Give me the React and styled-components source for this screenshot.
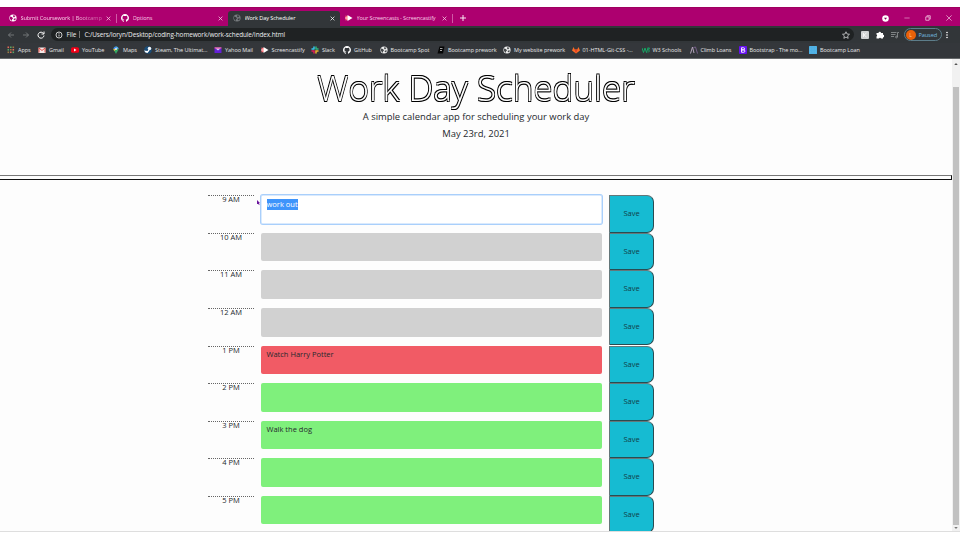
import React from 'react';
import styled, { createGlobalStyle } from 'styled-components';

const Global = createGlobalStyle`
  * { box-sizing: border-box; }
  body { margin: 0; background: #fff; font-family: "Open Sans", "Noto Sans", sans-serif; color: #25292d; }
`;

const Screen = styled.div`
  width: 960px; height: 540px; padding-top: 7px; overflow: hidden; background: #fff;
  display: flex; flex-direction: column;
`;

const TabStrip = styled.header`
  height: 19px; flex: none; display: flex; align-items: flex-end;
  background: #ad006f; border-top: 1px solid #a0005f; color: #f9d8ec;
`;
const Tab = styled.div`
  width: ${p => p.$w}px; height: 15.5px; padding: 0 5px 0 ${p => p.$pad || 9}px; flex: none;
  display: flex; align-items: center; gap: 3.5px;
  background: ${p => (p.$active ? '#323639' : 'transparent')};
  color: ${p => (p.$active ? '#fff' : '#f7cde5')};
  border-radius: 3px 3px 0 0;
  svg { flex: none; }
`;
const TabTitle = styled.span`
  flex: 1; min-width: 0; overflow: hidden; font-size: 5.6px; line-height: 9px; white-space: nowrap;
  letter-spacing: ${p => p.$ls ?? -0.1}px;
  ${p => p.$fade && 'mask-image: linear-gradient(90deg, #000 65%, rgba(0,0,0,.45) 90%);'}
`;
const Divider = styled.i`
  width: 1px; height: 9px; margin-bottom: 3px; background: #cf5aa6; flex: none;
`;
const NewTab = styled.div`
  height: 15.5px; padding-left: 7px; display: flex; align-items: center; flex: 1;
`;
const WindowControls = styled.div`
  display: flex; align-items: center; height: 18px; gap: 15px; padding: 2px 8px 0 0; color: #fff;
`;

const Toolbar = styled.div`
  height: 17px; flex: none; display: flex; align-items: center; background: #323639; padding-left: 7px;
`;
const NavIcons = styled.div`
  display: flex; gap: 7px; width: 44px; margin-left: -0.5px;
`;
const AddressBar = styled.div`
  width: 803px; height: 13px; flex: none; border-radius: 7px; background: #1f2223; color: #eceeef;
  display: flex; align-items: center; padding: 0 4px; font-size: 6.4px; letter-spacing: -0.05px;
`;
const Scheme = styled.span`
  margin-left: 4px; padding-right: 3px; border-right: 1px solid #777; line-height: 7px;
`;
const Url = styled.span`
  margin-left: 4px; flex: 1; white-space: nowrap; letter-spacing: -0.08px;
`;
const Extensions = styled.div`
  display: flex; align-items: center; gap: 7px; padding-left: 7px;
  svg { flex: none; }
`;
const Profile = styled.div`
  width: 38px; height: 13px; flex: none; margin: 0 -6px 0 -2px; border: 1px solid #5d7d8a; border-radius: 7px;
  display: flex; align-items: center; gap: 3px; padding-left: 1px; color: #75bde0; font-size: 5.6px;
  letter-spacing: -0.1px;
`;
const Avatar = styled.span`
  width: 10px; height: 10px; border-radius: 50%; background: #ea6209; color: #ffc59b;
  font-size: 5px; line-height: 10px; text-align: center;
`;

const Bookmarks = styled.nav`
  height: 16px; flex: none; display: flex; align-items: center; padding: 0 0 2px 7px;
  background: #34373b; border-bottom: 1px solid #66696b; color: #e6e7e8;
`;
const Bookmark = styled.div`
  width: ${p => p.$w}px; flex: none; display: flex; align-items: center; white-space: nowrap;
  font-size: 5.5px; line-height: 8px; letter-spacing: -0.04px;
  svg { flex: none; margin-right: 3px; }
`;

const Viewport = styled.div`
  height: 473px; flex: none; display: flex; overflow: hidden; background: #fdfdfd; border-bottom: 1px solid #dedede;
`;
const Page = styled.main`
  width: 952px; height: 475px;
`;
const Hero = styled.section`
  height: 116px; padding-top: 5px; text-align: center;
`;
const Title = styled.h1`
  margin: -1px 0 0; height: 44.5px; font-size: 35px; line-height: 50px; font-weight: 300; color: #fff;
  white-space: nowrap; will-change: transform;
  text-shadow: -0.7px -0.7px 0 #000, 0.7px -0.7px 0 #000, -0.7px 0.7px 0 #000, 0.7px 0.7px 0 #000;
`;
const Lead = styled.p`
  margin: 0; height: 17px; font-size: 9.42px; line-height: 17px;
`;
const Rule = styled.div`
  height: 5px; border: 1px solid #777; border-left: 0; border-bottom: 1px solid #111;
  border-right: 1px solid #111;
`;
const Schedule = styled.section`
  margin: 15.3px 0 0 208px; width: 448px; display: flex; flex-direction: column;
`;
const Row = styled.div`
  height: 37.57px; flex: none; display: grid; grid-template-columns: 46px 342px 45px; column-gap: 6.5px;
  align-items: start;
`;
const Hour = styled.div`
  border-top: 1px dotted #666; text-align: center; font-size: 7.5px; line-height: 7px;
`;
const colours = { past: '#d1d1d1', present: '#f15b65', future: '#7ff07c', active: '#fff' };
const Entry = styled.div`
  width: 341.9px; height: 28.6px; padding: 4.5px 6px; border-radius: 2px; font-size: 7.5px; line-height: 9px;
  background: ${p => colours[p.$state]};
  ${p => p.$state === 'active' && 'box-shadow: 0 0 0 1px #a9cffb, inset 0 0 0 0.5px #b5d6fb;'}
`;
const Selection = styled.span`
  display: inline-block; height: 11px; margin-top: -0.5px; line-height: 11px; background: #3e94fb; color: #fff;
`;
const SaveButton = styled.button`
  width: 45px; height: 37.5px; margin: 0; padding: 0 0 1.5px; border: solid;
  border-width: 1px 1.5px 1.5px 1px; border-color: #64777a #294c52 #294c52 #64777a;
  border-radius: 0 7px 7px 0; background: #16bbd2; color: #124048; font: 7.5px "Open Sans", sans-serif;
`;

const Scrollbar = styled.aside`
  width: 8px; height: 472px; background: #f1f1f1; display: flex; flex-direction: column;
  align-items: center; justify-content: space-between; padding: 3px 0 1px;
`;
const Thumb = styled.div`
  width: 6px; height: 438px; background: #c1c1c1; margin-top: 19px; flex: none;
`;
const Cursor = styled.svg`
  position: absolute; left: 257px; top: 200px;
`;

const Svg = ({ s = 8, children, ...rest }) => (
  <svg width={s} height={s} viewBox="0 0 16 16" fill="none" {...rest}>{children}</svg>
);
const Cross = ({ s = 5 }) => <Svg s={s} stroke="currentColor" strokeWidth="2.4"><path d="M2 2l12 12M14 2L2 14" /></Svg>;
const Globe = ({ c = '#eee', bg = '#45484b', s = 8 }) => (
  <Svg s={s}><circle cx="8" cy="8" r="7.2" fill={c} /><path d="M2 5l4 1 2 3-2 2v3L2 10zM9 2l4 2-3 3-2-2zM10 9l4 0-2 4-3-2z" fill={bg} /></Svg>
);
const Github = ({ s = 8 }) => (
  <Svg s={s}><path fill="#fff" fillRule="evenodd" d="M8 0C3.58 0 0 3.58 0 8c0 3.54 2.29 6.53 5.47 7.59.4.07.55-.17.55-.38v-1.49c-2.01.37-2.53-.49-2.69-.94-.09-.23-.48-.94-.82-1.13-.28-.15-.68-.52-.01-.53.63-.01 1.08.58 1.23.82.72 1.21 1.87.87 2.33.66.07-.52.28-.87.51-1.07-1.78-.2-3.64-.89-3.64-3.95 0-.87.31-1.59.82-2.15-.08-.2-.36-1.02.08-2.12 0 0 .67-.21 2.2.82a7.6 7.6 0 0 1 4 0c1.53-1.04 2.2-.82 2.2-.82.44 1.1.16 1.92.08 2.12.51.56.82 1.27.82 2.15 0 3.07-1.87 3.75-3.65 3.95.29.25.54.73.54 1.48v2.2c0 .21.15.46.55.38A8 8 0 0 0 16 8c0-4.42-3.58-8-8-8z" /></Svg>
);
const Cast = () => <Svg><path d="M1 3l7 2v6l-7 2z" fill="#ff6b73" /><path d="M5 2l10 6-10 6z" fill="#fff" /><path d="M0 7h5v2H0z" fill="#ffd0d4" /></Svg>;

const icons = {
  apps: <Svg>{[0, 1, 2].map(y => [0, 1, 2].map(x => <path key={`${x}${y}`} d={`M${1 + x * 5} ${1 + y * 5}h3.2v3.2h-3.2z`} fill={['#e36a58', '#58a566', '#9d7a46'][(x + y) % 3]} />))}</Svg>,
  gmail: <Svg><path d="M1 3h14v11H1z" fill="#f4e9e8" /><path d="M2 13V4l6 5 6-5v9" stroke="#e34b43" strokeWidth="2" /></Svg>,
  youtube: <Svg><rect y="2.5" width="16" height="11" rx="3" fill="#f00018" /><path d="M6 5l5 3-5 3z" fill="#fff" /></Svg>,
  maps: <Svg><path d="M8 16C7 12 3 10 3 6a5 5 0 0 1 10 0c0 4-4 6-5 10z" fill="#35a866" /><path d="M8 1a5 5 0 0 0-5 5h5z" fill="#4284ee" /><path d="M8 1v5h5a5 5 0 0 0-5-5z" fill="#52a5ef" /><path d="M3 6c0 2 1 3 2 4l3-4z" fill="#f4bd32" /><circle cx="8" cy="6" r="2" fill="#eee" /></Svg>,
  steam: <Svg><circle cx="8" cy="8" r="7.5" fill="#194d79" /><circle cx="11" cy="5" r="3.5" fill="#f1f6fb" /><path d="M0 9l7 1 2-3 2 2-4 5-4-1z" fill="#fff" /></Svg>,
  yahoo: <Svg><path d="M1 3h14v11H1z" fill="#6420d8" /><path d="M1 3l7 6 7-6z" fill="#d9cff9" /><path d="M1 3h14v2H1z" fill="#de397e" /></Svg>,
  cast: <Cast />,
  slack: <Svg strokeWidth="3" strokeLinecap="round"><path d="M6 2v4M2 6h4" stroke="#36c5f0" /><path d="M10 2v4M14 6h-3" stroke="#2eb67d" /><path d="M10 14v-4h4" stroke="#ecb22e" /><path d="M6 14v-4H2" stroke="#e01e5a" /></Svg>,
  github: <Github />,
  globe: <Globe />,
  prework: <Svg><path d="M5 1h10l-3 14H1z" fill="#050505" /><path d="M6 5h5M6 9h4" stroke="#ddd" strokeWidth="1.5" /></Svg>,
  gitlab: <Svg><path d="M8 15L0 9l3-7 2.5 5h5L13 2l3 7z" fill="#fc6d26" /><path d="M8 15L5 7h6z" fill="#e24329" /></Svg>,
  w3: <Svg stroke="#16a765" strokeWidth="2"><path d="M0 4l3 9 3-9 3 9 3-9M11 4h4l-2 4 2 2-3 3" /></Svg>,
  climb: <Svg strokeWidth="2"><path d="M1 15L5 2l3 12" stroke="#b5a6bc" /><path d="M7 3l4-1 4 13" stroke="#76608a" /></Svg>,
  bootstrap: <Svg><rect width="16" height="16" rx="2" fill="#6610f2" /><path d="M5 3.5h4a2 2 0 0 1 0 4.3H5zm0 4.3h4.5a2.3 2.3 0 0 1 0 4.7H5z" stroke="#fff" strokeWidth="1.8" /></Svg>,
  loan: <Svg><rect width="16" height="16" rx="1" fill="#4eb0e4" /><path d="M3 1v14M8 1v14M13 1v14" stroke="#70c1eb" strokeDasharray="1 2" /></Svg>,
};

const bookmarks = [
  ['apps', 'Apps', 31], ['gmail', 'Gmail', 33], ['youtube', 'YouTube', 41], ['maps', 'Maps', 32],
  ['steam', 'Steam, The Ultimat...', 70], ['yahoo', 'Yahoo Mail', 46.5], ['cast', 'Screencastify', 50.5],
  ['slack', 'Slack', 32], ['github', 'GitHub', 36.5], ['globe', 'Bootcamp Spot', 57.5],
  ['prework', 'Bootcamp prework', 66], ['globe', 'My website prework', 68.5],
  ['gitlab', '01-HTML-Git-CSS -...', 70], ['w3', 'W3 Schools', 48], ['climb', 'Climb Loans', 49],
  ['bootstrap', 'Bootstrap - The mo...', 70.5], ['loan', 'Bootcamp Loan', 60],
];

const rows = [
  ['9 AM', 'active', 'work out'], ['10 AM', 'past', ''], ['11 AM', 'past', ''], ['12 AM', 'past', ''],
  ['1 PM', 'present', 'Watch Harry Potter'], ['2 PM', 'future', ''], ['3 PM', 'future', 'Walk the dog'],
  ['4 PM', 'future', ''], ['5 PM', 'future', ''],
];

export default function App() {
  return (
    <Screen>
      <Global />
      <TabStrip>
        <Tab $w={116}><Globe c="#fff" bg="#ad006f" /><TabTitle $fade>Submit Coursework | Bootcamp</TabTitle><Cross /></Tab>
        <Divider />
        <Tab $w={110.5} $pad={4}><Github /><TabTitle>Options</TabTitle><Cross /></Tab>
        <Tab $w={112.5} $pad={5.5} $active><Globe c="#777b7e" bg="#35383b" /><TabTitle>Work Day Scheduler</TabTitle><Cross /></Tab>
        <Tab $w={112} $pad={5}><Cast /><TabTitle $ls={-0.14}>Your Screencasts - Screencastify</TabTitle><Cross /></Tab>
        <Divider />
        <NewTab><Svg s={6} stroke="#fff" strokeWidth="2.4"><path d="M8 0v16M0 8h16" /></Svg></NewTab>
        <WindowControls>
          <Svg s={7}><circle cx="8" cy="8" r="7.5" fill="#fff" /><path d="M4.5 6h7L8 11z" fill="#850055" /></Svg>
          <Svg s={6} stroke="#e290c4" strokeWidth="2"><path d="M1 8h14" /></Svg>
          <Svg s={6} stroke="#f5cfe5" strokeWidth="2"><path d="M2 5h9v9H2zM5 4V2h9v9h-2" /></Svg>
          <Svg s={6} stroke="#f5cfe5" strokeWidth="1.8"><path d="M1 1l14 14M15 1L1 15" /></Svg>
        </WindowControls>
      </TabStrip>
      <Toolbar>
        <NavIcons>
          <Svg stroke="#7d8183" strokeWidth="1.7"><path d="M14 8H3M8 3L3 8l5 5" /></Svg>
          <Svg stroke="#7d8183" strokeWidth="1.7"><path d="M2 8h11M8 3l5 5-5 5" /></Svg>
          <Svg stroke="#fff" strokeWidth="2"><path d="M13 5a6 6 0 1 0 1 4M14 1v5H9" /></Svg>
        </NavIcons>
        <AddressBar>
          <Svg s={8} stroke="#ddd" strokeWidth="1.8"><circle cx="8" cy="8" r="6" /><path d="M8 7v4M8 4v1.5" /></Svg>
          <Scheme>File</Scheme>
          <Url>C:/Users/loryn/Desktop/coding-homework/work-schedule/index.html</Url>
          <Svg stroke="#d8dadb" strokeWidth="1.5"><path d="M8 1.5l2 4.5 5 .5-3.7 3.3 1 4.9L8 12.2l-4.3 2.5 1-4.9L1 6.5 6 6z" /></Svg>
        </AddressBar>
        <Extensions>
          <Svg><rect width="16" height="16" rx="2" fill="#d1d3d4" /><path d="M5 4v8M11 4L6 8l5 4" stroke="#f5f5f5" strokeWidth="2" /></Svg>
          <Svg><path d="M1 4h4a2.5 2.5 0 1 1 5 0h4v4a2.2 2.2 0 1 1 0 4v3h-4a2.2 2.2 0 0 0-4 0H1v-4a2.2 2.2 0 0 0 0-4z" fill="#fff" /></Svg>
          <Svg stroke="#8e9193" strokeWidth="1.7"><path d="M0 3h11M0 7h9M0 11h6M13 12V3h3" /><circle cx="11" cy="12" r="1.8" /></Svg>
          <Profile><Avatar>L</Avatar>Paused</Profile>
          <Svg s={8}><circle cx="8" cy="3" r="1.6" fill="#fff" /><circle cx="8" cy="8" r="1.6" fill="#fff" /><circle cx="8" cy="13" r="1.6" fill="#fff" /></Svg>
        </Extensions>
      </Toolbar>
      <Bookmarks>
        {bookmarks.map(([icon, label, w]) => <Bookmark key={label} $w={w}>{icons[icon]}{label}</Bookmark>)}
      </Bookmarks>
      <Viewport>
        <Page>
          <Hero>
            <Title>Work Day Scheduler</Title>
            <Lead>A simple calendar app for scheduling your work day</Lead>
            <Lead>May 23rd, 2021</Lead>
          </Hero>
          <Rule />
          <Schedule>
            {rows.map(([hour, state, text]) => (
              <Row key={hour}>
                <Hour>{hour}</Hour>
                <Entry $state={state}>{state === 'active' ? <Selection>{text}</Selection> : text}</Entry>
                <SaveButton>Save</SaveButton>
              </Row>
            ))}
          </Schedule>
        </Page>
        <Scrollbar>
          <Svg s={4}><path d="M1 12h14L8 4z" fill="#555" /></Svg>
          <Thumb />
          <Svg s={4}><path d="M1 4h14l-7 8z" fill="#777" /></Svg>
        </Scrollbar>
      </Viewport>
      <Cursor width="4" height="6" viewBox="0 0 4 6"><path d="M0 0l3 3-1 .3.7 2L1 4 0 4z" fill="#6a159c" /></Cursor>
    </Screen>
  );
}
